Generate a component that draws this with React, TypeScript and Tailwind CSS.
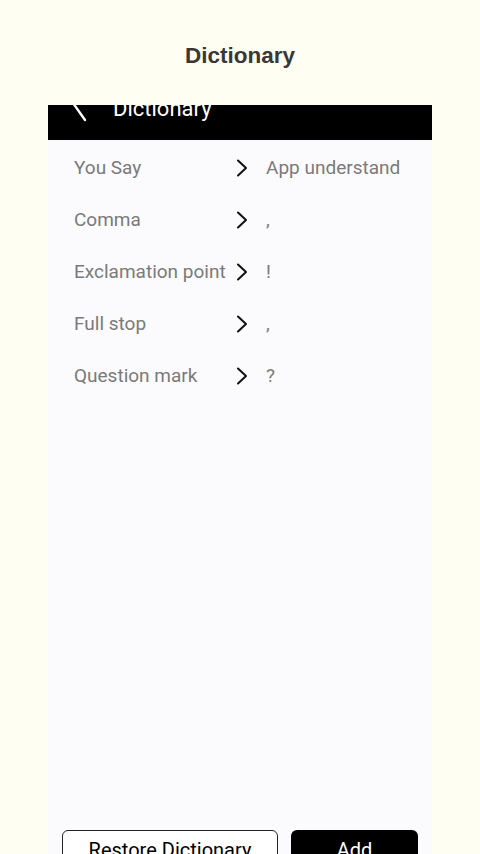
const rows: [string, string][] = [
  ["You Say", "App understand"],
  ["Comma", ","],
  ["Exclamation point", "!"],
  ["Full stop", ","],
  ["Question mark", "?"],
];

function Chevron() {
  return (
    <svg width="12" height="18" viewBox="0 0 12 18" fill="none" stroke="currentColor" strokeWidth="2" strokeLinecap="round" strokeLinejoin="round">
      <path d="M2 1.5 L10 9 L2 16.5" />
    </svg>
  );
}

export default function App() {
  return (
    <div className="h-[854px] w-[480px] overflow-hidden bg-[#fffef3] flex flex-col" style={{ fontFamily: "Roboto, 'Liberation Sans', sans-serif" }}>
      {/* page title */}
      <div className="h-[105px] flex justify-center pt-[42px]">
        <h1 className="text-[22.5px] leading-[28px] font-bold text-[#383836]" style={{ fontFamily: "'Liberation Sans', Arial, sans-serif" }}>
          Dictionary
        </h1>
      </div>

      {/* phone screen */}
      <div className="w-[384px] ml-[48px] flex-1 min-h-0 flex flex-col bg-[#fbfafd]">
        {/* app bar, scrolled so its top is cut */}
        <div className="h-[35px] bg-black overflow-hidden flex items-start text-white">
          <svg className="ml-[23px] shrink-0" width="16" height="18" viewBox="0 0 16 18" fill="none" stroke="currentColor" strokeWidth="2.4" strokeLinecap="round">
            <path d="M2 -2 L14 15" />
          </svg>
          <span className="ml-[26px] -mt-[7px] text-[22px] leading-[22px]">Dictionary</span>
        </div>

        <div className="flex-1 min-h-0 pt-[2px]">
          {rows.map(([say, app]) => (
            <div key={say} className="h-[52px] flex items-center text-[19px] text-[#7a7a7a]">
              <span className="w-[162px] ml-[26px] whitespace-nowrap">{say}</span>
              <span className="w-[30px] text-[#111] flex items-center">
                <Chevron />
              </span>
              <span className="whitespace-nowrap">{app}</span>
            </div>
          ))}
        </div>

        <div className="h-[24px] overflow-hidden flex items-start gap-[13px] pl-[14px]">
          <button className="shrink-0 w-[216px] h-[40px] rounded-[6px] border border-[#222] bg-white text-[20px] text-black">
            Restore Dictionary
          </button>
          <button className="shrink-0 w-[127px] h-[40px] rounded-[6px] bg-black text-[20px] text-white">
            Add
          </button>
        </div>
      </div>
    </div>
  );
}
